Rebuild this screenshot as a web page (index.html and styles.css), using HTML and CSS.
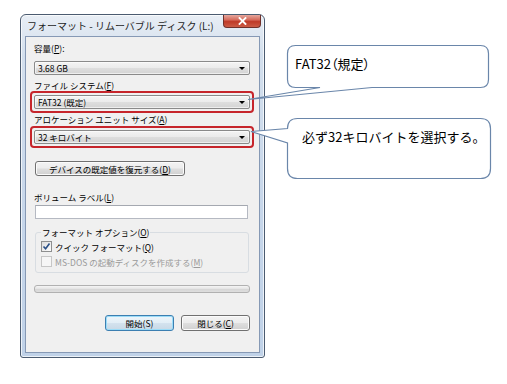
FILE: index.html
```html
<!DOCTYPE html>
<html>
<head>
  <meta charset="UTF-8">
  <title>フォーマット - リムーバブル ディスク (L:)</title>
  <link rel="stylesheet" href="styles.css">
</head>
<body>
  <div class="page">
    <!-- Format dialog -->
    <div class="window">
      <div class="titlebar">
        <span class="title">フォーマット - リムーバブル ディスク (L:)</span>
        <span class="close">
          <svg width="9" height="8" viewBox="0 0 9 8"><path d="M1.5 1 L7.5 7 M7.5 1 L1.5 7" stroke="#fff" stroke-width="1.8" stroke-linecap="square"/></svg>
        </span>
      </div>
      <div class="client">
        <div class="label">容量(<u>P</u>):</div>
        <div class="combo first"><span>3.68 GB</span><i class="arrow"></i></div>

        <div class="label gap">ファイル システム(<u>F</u>)</div>
        <div class="mark"><div class="combo"><span>FAT32 (既定)</span><i class="arrow"></i></div></div>

        <div class="label">アロケーション ユニット サイズ(<u>A</u>)</div>
        <div class="mark tight"><div class="combo"><span>32 キロバイト</span><i class="arrow"></i></div></div>

        <button class="btn restore">デバイスの既定値を復元する(<u>D</u>)</button>

        <div class="label volume">ボリューム ラベル(<u>L</u>)</div>
        <div class="textbox"></div>

        <fieldset class="group">
          <legend>フォーマット オプション(<u>O</u>)</legend>
          <div class="check">
            <span class="box checked">
              <svg width="9" height="9" viewBox="0 0 9 9"><path d="M1.5 4.5 L3.6 6.8 L7.5 1.6" fill="none" stroke="#2a4f86" stroke-width="1.6"/></svg>
            </span>
            <span>クイック フォーマット(<u>Q</u>)</span>
          </div>
          <div class="check disabled">
            <span class="box"></span>
            <span>MS-DOS の起動ディスクを作成する(<u>M</u>)</span>
          </div>
        </fieldset>

        <div class="progress"></div>

        <div class="actions">
          <button class="btn default">開始(S)</button>
          <button class="btn">閉じる(<u>C</u>)</button>
        </div>
      </div>
    </div>

    <!-- Annotation callouts -->
    <svg class="callouts" width="507" height="384" viewBox="0 0 507 384">
      <path d="M295.5 45.5 H480.5 Q488.5 45.5 488.5 53.5 V79.5 Q488.5 87.5 480.5 87.5 H372 L248 99.5 L320 87.5 H295.5 Q287.5 87.5 287.5 79.5 V53.5 Q287.5 45.5 295.5 45.5 Z" fill="#fff" stroke="#6a86aa" stroke-width="1.2"/>
      <path d="M297.5 118.5 H480.5 Q490.5 118.5 490.5 128.5 V168.5 Q490.5 178.5 480.5 178.5 H297.5 Q287.5 178.5 287.5 168.5 V143 L251 131.5 L287.5 128.5 Q287.5 118.5 297.5 118.5 Z" fill="#fff" stroke="#6a86aa" stroke-width="1.2"/>
    </svg>
    <div class="note note1">FAT32（規定）</div>
    <div class="note note2">必ず32キロバイトを選択する。</div>
  </div>
</body>
</html>
```

FILE: styles.css
```css
body { margin: 0; background: #fff; font-family: "Noto Sans CJK JP", "Noto Sans", sans-serif; color: #000; }
.page { position: relative; width: 507px; height: 384px; padding: 14px 0 0 20px; box-sizing: border-box; }

/* window frame */
.window { width: 245px; box-sizing: border-box; border: 1px solid #4b5b70; border-radius: 6px 6px 3px 3px; padding: 0 4px 4px; background: linear-gradient(#e8eef5, #d3dfed 12%, #c6d6ea 60%, #c0d2e8); box-shadow: inset 0 0 0 1px rgba(255,255,255,0.7); }
.titlebar { height: 21px; display: flex; justify-content: space-between; align-items: center; }
.title { font-size: 10px; line-height: 12px; margin-left: 2px; color: #1e1e1e; white-space: nowrap; }
.close { align-self: flex-start; width: 38px; height: 13px; margin-right: -1px; box-sizing: border-box; display: flex; align-items: center; justify-content: center; border: 1px solid #70302a; border-top: none; border-radius: 0 0 4px 4px; background: linear-gradient(#e5a89e, #d66b5c 40%, #bf3a28 55%, #cb5b45); }

.client { background: #f0f0f0; border: 1px solid #8699b5; padding: 5px 9px 21px 8px; }

/* controls */
.label { font-size: 8.5px; line-height: 12px; height: 12px; white-space: nowrap; }
.label.gap { margin-top: 4px; }
.label.volume { margin-top: 15px; }
u { text-decoration: underline; text-underline-offset: 1px; }

.combo { height: 14px; box-sizing: border-box; display: flex; align-items: center; justify-content: space-between; padding: 0 4px 0 3px; border: 1px solid #8a8a8a; border-radius: 2px; background: linear-gradient(#f4f4f4, #ebebeb 50%, #dedede 51%, #d4d4d4); box-shadow: inset 0 0 0 1px rgba(255,255,255,0.6); font-size: 8.5px; line-height: 12px; }
.combo.first { margin-top: 7px; }
.arrow { width: 0; height: 0; border-top: 3px solid #000; border-left: 3px solid transparent; border-right: 3px solid transparent; }

.mark { margin: 0 -4px; padding: 2px; border: 2px solid #c6252b; border-radius: 4px; }
.mark.tight { margin-top: 1px; }

.btn { display: flex; align-items: center; justify-content: center; box-sizing: border-box; padding: 0; font-family: inherit; font-size: 8.5px; color: #000; border: 1px solid #707070; border-radius: 3px; background: linear-gradient(#f3f3f3, #ececec 48%, #dedede 52%, #d0d0d0); box-shadow: inset 0 0 0 1px #fbfbfb; }
.restore { margin: 13px 0 0 1px; width: 150px; height: 15px; }

.textbox { margin: 2px 2px 0 1px; height: 14px; box-sizing: border-box; background: #fff; border: 1px solid #b5b9c2; border-top-color: #a4a8b0; }

.group { margin: 7px 1px 0 1px; padding: 1px 5px 3px; border: 1px solid #d8dde2; border-radius: 3px; min-inline-size: 0; }
.group legend { padding: 0 1px; font-size: 8.5px; line-height: 12px; }
.check { height: 15px; display: flex; align-items: center; gap: 3px; font-size: 8.5px; white-space: nowrap; }
.box { width: 11px; height: 11px; box-sizing: border-box; display: flex; align-items: center; justify-content: center; border: 1px solid #8e8f8f; background: linear-gradient(135deg, #dcdcdc, #fdfdfd); }
.check.disabled { color: #9a9a9a; }
.check.disabled .box { border-color: #c6c6c6; background: #f6f6f6; }

.progress { margin-top: 12px; height: 8px; box-sizing: border-box; border: 1px solid #b1b1b1; border-radius: 3px; background: linear-gradient(#f5f5f5, #e3e3e3 50%, #d6d6d6 51%, #dedede); }

.actions { margin-top: 22px; display: flex; justify-content: flex-end; gap: 7px; }
.actions .btn { width: 69px; height: 16px; }
.btn.default { border-color: #3c7fb1; box-shadow: inset 0 0 0 1px #9bdcf8; background: linear-gradient(#eef6fb, #e2eef6 48%, #d3e2ee 52%, #c8d9e6); }

/* callouts */
.callouts { position: absolute; left: 0; top: 0; pointer-events: none; }
.note { position: absolute; font-size: 13px; line-height: 16px; color: #000; white-space: nowrap; }
.note1 { left: 295px; top: 56px; font-feature-settings: "palt"; }
.note2 { left: 302px; top: 129px; }
```
